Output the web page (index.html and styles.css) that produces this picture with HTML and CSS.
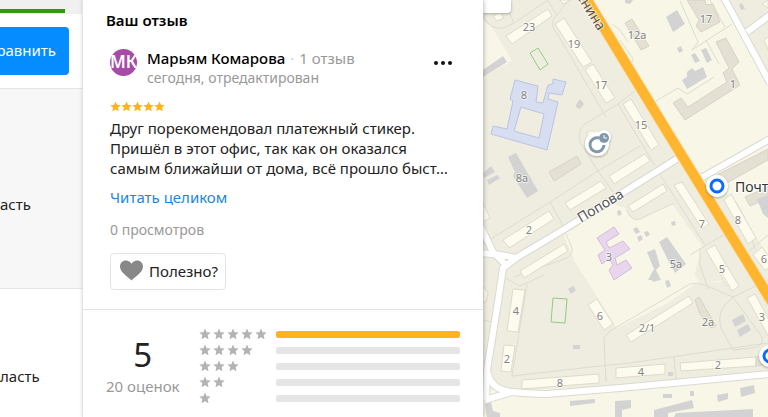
FILE: index.html
```html
<!DOCTYPE html>
<html lang="ru">
<head>
    <meta charset="UTF-8">
    <meta name="viewport" content="width=device-width, initial-scale=1.0">
    <title>Отзывы на карте</title>
    <link rel="stylesheet" href="styles.css">
</head>
<body>

    <svg class="sprite" aria-hidden="true">
        <symbol id="star" viewBox="0 0 24 24">
            <path d="M12 1l3.3 7.4 8 .8-6 5.400 1.700 7.900-7-4.100-7 4.100 1.700-7.900-6-5.400 8-.8z"/>
        </symbol>
    </svg>

    <div class="layout">
        <aside class="sidebar">
            <div class="progress"></div>
            <div class="toolbar">
                <button type="button" class="compare">равнить</button>
            </div>
            <div class="place place-active">асть</div>
            <div class="place">ласть</div>
        </aside>

        <main class="panel">
            <section class="review-section">
                <h2>Ваш отзыв</h2>
                <article class="review">
                    <header class="review-header">
                        <div class="avatar">МК</div>
                        <div class="author">
                            <div><b>Марьям Комарова</b><span class="dot">·</span><span class="muted">1 отзыв</span></div>
                            <div class="muted date">сегодня, отредактирован</div>
                        </div>
                        <button type="button" class="more" aria-label="Ещё">
                            <svg viewBox="0 0 18 4"><circle cx="2" cy="2" r="2"/><circle cx="9" cy="2" r="2"/><circle cx="16" cy="2" r="2"/></svg>
                        </button>
                    </header>
                    <div class="stars">
                        <svg><use href="#star"/></svg>
                        <svg><use href="#star"/></svg>
                        <svg><use href="#star"/></svg>
                        <svg><use href="#star"/></svg>
                        <svg><use href="#star"/></svg>
                    </div>
                    <p class="review-text">Друг порекомендовал платежный стикер.<br>Пришёл в этот офис, так как он оказался<br>самым ближайши от дома, всё прошло быст…</p>
                    <a href="#" class="read-more">Читать целиком</a>
                    <div class="views">0 просмотров</div>
                    <button type="button" class="useful">
                        <svg viewBox="0 0 24 21"><path d="M12 21C9 17.500 0 12.500 0 6.500 0 2.500 2.700 0 6.200 0 8.700 0 11 1.300 12 3.500 13 1.300 15.300 0 17.800 0 21.300 0 24 2.500 24 6.500 24 12.500 15 17.500 12 21z"/></svg>
                        Полезно?
                    </button>
                </article>
            </section>

            <section class="rating">
                <div class="summary">
                    <div class="score">5</div>
                    <div class="count">20 оценок</div>
                </div>
                <div class="bars">
                    <div class="bar-row">
                        <div class="bar-stars"><svg><use href="#star"/></svg><svg><use href="#star"/></svg><svg><use href="#star"/></svg><svg><use href="#star"/></svg><svg><use href="#star"/></svg></div>
                        <div class="bar bar-full"></div>
                    </div>
                    <div class="bar-row">
                        <div class="bar-stars"><svg><use href="#star"/></svg><svg><use href="#star"/></svg><svg><use href="#star"/></svg><svg><use href="#star"/></svg></div>
                        <div class="bar"></div>
                    </div>
                    <div class="bar-row">
                        <div class="bar-stars"><svg><use href="#star"/></svg><svg><use href="#star"/></svg><svg><use href="#star"/></svg></div>
                        <div class="bar"></div>
                    </div>
                    <div class="bar-row">
                        <div class="bar-stars"><svg><use href="#star"/></svg><svg><use href="#star"/></svg></div>
                        <div class="bar"></div>
                    </div>
                    <div class="bar-row">
                        <div class="bar-stars"><svg><use href="#star"/></svg></div>
                        <div class="bar"></div>
                    </div>
                </div>
            </section>
        </main>

        <div class="map">
            <svg class="map-canvas" viewBox="483 0 285 417" preserveAspectRatio="xMinYMin slice" role="img" aria-label="Карта">
                <!-- land -->
                <g class="land">
                    <path d="M483 0H587L671 138 677 155 620 190 516 254 483 250V77L512 61 493 29 483 20z"/>
                    <path d="M483 255L510 262 563 231 575 262 617 328 668 303 695 284 720 282 746 268 775 306V375L620 386 520 390 483 390z"/>
                    <path d="M563 231L682 157 752 275 700 284 668 220z"/>
                    <path d="M725 0H768V78L745 35z"/>
                    <path d="M703 177L725 190 768 255V295z"/>
                </g>
                <path class="land-light" d="M564 236L610 203 625 208Q630 222 638 220L672 204 702 246 692 285 668 300 617 328 575 262z"/>

                <!-- paths and yard borders -->
                <g class="yards">
                    <path d="M483 16Q490 30 503 28L514 23 548 0M548 0L557 16M569 0L553 20Q551 27 558 35L606 117M514 23L509 12"/>
                    <path d="M635 91L618 104 585 124Q577 130 580 142L598 171 613 192M618 104L642 144 655 166M598 171L550 202 483 244M598 171L640 146M550 202L560 220 572 248Q573 254 567 258L514 277"/>
                    <path d="M612 24L620 30 628 42M620 40L632 57Q636 64 625 62M656 101L678 88 687 94 714 77M680 1L698 42 692 50 732 24M706 40L719 64M710 0L725 27"/>
                    <path d="M658 172L670 190 705 245M627 210Q632 222 640 219L674 203M690 255L725 234M700 248L700 265 708 289M748 252L768 235M730 195Q745 210 755 249"/>
                    <path d="M527 284L512 376M512 376L600 366 630 363 768 343M606 382L604 338Q606 333 620 325L690 284Q697 282 705 285L733 297 762 337Q764 346 753 348L733 350 721 328Q715 310 733 297L768 280M674 357L676 380M483 320L492 322M500 275L520 286 544 275"/>
                </g>

                <!-- streets -->
                <g class="street-edge">
                    <path id="s1" d="M480 253Q500 254 516 258L563 230 680 157"/>
                    <path id="s2" d="M480 225L493 252 505 264M516 258L503 268 498 302 487 370Q490 390 512 392T547 394L620 388 770 374M485 400L512 392M487 370L486 400"/>
                    <path id="s3" d="M701 178L770 139M723 -4L770 83M747 32L770 15"/>
                </g>
                <g class="street">
                    <use href="#s1"/><use href="#s2"/><use href="#s3"/>
                </g>
                <path class="avenue-edge" d="M584 -5L671 138 780 315"/>
                <path class="avenue" d="M584 -5L671 138 780 315"/>

                <!-- residential buildings -->
                <g class="house">
                    <path d="M506 36L548 9 552 16 512 44z M555 24L564 18 592 62 583 67z M585 70L593 64 615 98 606 103z"/>
                    <path d="M560 0H571L563 4z M493 16L500 12 504 18 497 21z"/>
                    <path d="M623 104L631 99 659 145 651 150z M586 133L593 130 608 153 601 158z"/>
                    <path d="M565 203L601 181 606 188 570 210z M609 176L645 154 650 161 614 184z M503 240L549 211 554 219 509 248z M520 271L564 244 568 251 524 278z"/>
                    <path d="M628 206L663 184 667 191 633 212z M674 185L682 182 709 224 702 229z M724 200L731 194 756 238 748 244z M706 250L715 245 735 281 727 286z"/>
                    <path d="M753 255L762 247 775 265 765 270z M626 335L689 296 693 303 631 342z M747 298L755 294 780 340 775 348z M720 270L727 266 739 286 732 291z"/>
                    <path d="M513 289L525 290 518 332 507 331z M504 345L515 346 511 372 501 371z M588 305L597 299 613 324 604 330z"/>
                    <path d="M522 380L599 374V383L522 389z M616 368L665 364V374L616 378z M680 363L756 357V366L681 371z M762 4L768 0V8z M764 40L770 36V54z"/>
                    <path d="M483 203L490 218 483 222z M483 286L488 293 486 302 483 302z"/>
                </g>
                <g class="house-dark">
                    <path d="M625 23L632 19 649 46 641 50z M687 0H705L706 5 713 4 720 22 701 32 696 26 699 20z"/>
                    <path d="M716 42L726 38 739 62 732 69 740 85 685 120 673 103 681 98 688 107 727 82 723 73 729 68z"/>
                    <path d="M549 172L577 156 581 164 554 181z M717 175L768 149V160L725 184z M745 197L768 187V198L750 206z M695 300L699 297 716 326 711 328 700 314z M756 357L768 355V364L756 366z"/>
                </g>
                <g class="school">
                    <path d="M515 80L538 86 536 102 543 103 548 85 553 84V79L566 82 562 95 549 93 548 99 558 102 547 150 491 134 493 126 507 129 513 101 510 99z M521 107L514 131 539 138 544 114z"/>
                </g>
                <g class="kinder">
                    <path d="M597 238L614 227 619 234 606 242 609 248 623 241 630 249 615 258 617 265 626 260 632 268 614 280 609 270 613 265 609 259 602 264 598 255 605 250z"/>
                </g>
                <g class="shed">
                    <path d="M483 70L503 56 507 62 483 77z M576 105L580 99 584 104 580 109 576 107z M625 0H633L630 4 625 3z M666 17L677 10 685 24 673 32z M677 48L681 46 683 51 679 53z M691 55L695 53 700 61 695 63z M701 50L706 48 712 60 707 63z"/>
                    <path d="M682 80L687 77V72L692 68 695 71 703 67 707 77 687 89z M739 5L742 3 745 9 741 10z M508 157L516 153 538 191 527 198 513 176 515 172z"/>
                    <path d="M483 173L491 166 495 172 484 178z M487 180L497 175 500 178 489 185z M617 211L620 210 622 214 618 216z M671 222L675 221 676 225 672 226z M633 229L637 227 640 232 636 234z M637 237L641 235 643 239 639 242z M644 232L648 231 650 235 646 237z"/>
                    <path d="M659 242L667 237 686 264 675 273 668 260z M647 252L655 249 660 266 656 270 661 280H648L654 269z M757 199L768 195V218L763 214z M732 320L743 314 746 321 735 327z M737 330L748 324 751 330 740 337z"/>
                    <path d="M568 289L573 286 576 290 571 294z M573 345H580V349H573z M650 276L657 275 660 280 653 282z M665 281L669 280 671 286 667 288z M668 372H673V376H668z"/>
                    <path d="M570 401L595 399V403L570 406z M485 404L491 402 493 411 500 413V417H487z M615 401L631 400V408L622 410V417H615z M663 394H672V398H663z M690 391H694V396H690z M717 395L728 393V399L718 402z M740 388L754 385 755 393 741 397z M654 410L692 400 694 408 668 413V417H654z M676 413L753 409V417H674z"/>
                </g>
                <g class="pitch">
                    <path d="M530 53L538 48 548 64 540 70z M553 298L567 299 565 323 551 322z"/>
                </g>

                <g class="numbers">
                    <text x="529" y="31">23</text>
                    <text x="574" y="48">19</text>
                    <text x="601" y="89">17</text>
                    <text x="524" y="99">8</text>
                    <text x="706" y="23">17</text>
                    <text x="637" y="39">12а</text>
                    <text x="733" y="88">1</text>
                    <text x="641" y="129">15</text>
                    <text x="522" y="182">8а</text>
                    <text x="529" y="234">2</text>
                    <text x="609" y="261">3</text>
                    <text x="702" y="228">7</text>
                    <text x="738" y="224">8</text>
                    <text x="676" y="268">5а</text>
                    <text x="722" y="273">5</text>
                    <text x="764" y="263">6</text>
                    <text x="516" y="315">4</text>
                    <text x="507" y="363">2</text>
                    <text x="600" y="320">6</text>
                    <text x="560" y="387">8</text>
                    <text x="647" y="332">2/1</text>
                    <text x="708" y="326">2а</text>
                    <text x="762" y="321">3</text>
                    <text x="641" y="376">4</text>
                    <text x="718" y="369">2</text>
                </g>
                <text class="street-name" transform="translate(581 223) rotate(-31)">Попова</text>
                <text class="street-name" transform="translate(571 -12) rotate(58)">Ленина</text>

                <!-- bank pin -->
                <g class="pin-bank">
                    <circle class="pin-bg" cx="597" cy="144" r="12"/>
                    <circle class="pin-bg" cx="604" cy="137" r="7"/>
                    <path d="M599 138A7 7 0 1 0 604 145"/>
                    <circle class="clock" cx="604" cy="138" r="5"/>
                    <path class="hands" d="M604 135V138H607"/>
                </g>
                <!-- post office pins -->
                <g class="pin-post">
                    <circle class="pin-bg" cx="717" cy="186" r="11"/>
                    <circle class="ring" cx="717" cy="186" r="6"/>
                    <circle class="pin-bg" cx="770" cy="356" r="11"/>
                    <circle class="ring" cx="770" cy="356" r="6"/>
                </g>
                <text class="poi" x="735" y="192">Почта</text>
            </svg>
            <div class="map-control"></div>
        </div>
    </div>

</body>
</html>
```

FILE: styles.css
```css
* {
    box-sizing: border-box;
}

body {
    margin: 0;
    font-family: 'Noto Sans', sans-serif;
    font-size: 15px;
    line-height: 20px;
    color: #222;
    background: #fff;
}

h2, p {
    margin: 0;
}

button {
    font: inherit;
    color: inherit;
    cursor: pointer;
}

.sprite {
    display: none;
}

.layout {
    display: grid;
    grid-template-columns: 82fr 401fr 285fr;
    grid-template-rows: minmax(0, 1fr);
    height: 100vh;
    overflow: hidden;
}

/* left column */
.sidebar {
    display: flex;
    flex-direction: column;
    overflow: hidden;
}

.progress {
    height: 14px;
    flex-shrink: 0;
    padding-top: 9px;
    background: #f0f0f0;
}

.progress::before {
    content: '';
    display: block;
    width: 65px;
    height: 4px;
    background: #2e9c08;
}

.toolbar {
    display: flex;
    flex-shrink: 0;
    justify-content: flex-end;
    padding: 13px;
    border-bottom: 1px solid #e4e4e4;
}

.compare {
    height: 48px;
    padding: 0 13px 2px;
    border: none;
    border-radius: 4px;
    background: #058cff;
    color: #fff;
}

.place {
    height: 200px;
    padding-top: 77px;
    flex-shrink: 0;
}

.place-active {
    padding-top: 105px;
    background: #f7f7f7;
    border-bottom: 1px solid #e4e4e4;
}

/* review panel */
.panel {
    position: relative;
    z-index: 1;
    background: #fff;
    border-left: 1px solid #e4e4e4;
    box-shadow: 1px 0 4px rgba(0, 0, 0, 0.25);
}

.review-section {
    padding: 10px 23px 19px;
    border-bottom: 1px solid #e4e4e4;
}

h2 {
    font-size: 15px;
    font-weight: 600;
    color: #000;
}

.review {
    padding: 18px 4px 0;
}

.review-header {
    display: flex;
    gap: 10px;
}

.avatar {
    width: 27px;
    height: 27px;
    margin-top: 1px;
    border-radius: 50%;
    background: #a64ca6;
    color: #fff;
    font-size: 17px;
    font-weight: 600;
    line-height: 26px;
    display: flex;
    justify-content: center;
}

.author {
    flex: 1;
}

.author b {
    font-weight: 500;
    color: #000;
}

.date {
    font-size: 14px;
}

.dot {
    margin: 0 5px;
    color: #ccc;
}

.muted, .views, .count {
    color: #999;
}

.more {
    align-self: flex-start;
    display: flex;
    padding: 13px 4px;
    border: none;
    background: none;
}

.more svg {
    width: 18px;
    height: 4px;
    fill: #111;
}

.stars {
    display: flex;
    margin-top: 13px;
}

.stars svg {
    width: 11px;
    height: 11px;
    fill: #ffb41f;
}

.review-text {
    margin-top: 6px;
    white-space: nowrap;
}

.read-more {
    display: block;
    margin-top: 9px;
    color: #1c86e0;
    text-decoration: none;
}

.views {
    margin-top: 13px;
    font-size: 14px;
}

.useful {
    display: flex;
    align-items: center;
    gap: 6px;
    height: 37px;
    margin-top: 13px;
    padding: 0 7px 2px 9px;
    border: 1px solid #e4e4e4;
    border-radius: 4px;
    background: #fff;
}

.useful svg {
    width: 23px;
    height: 21px;
    fill: #888;
}

/* rating summary */
.rating {
    display: flex;
    gap: 19px;
    padding: 16px 23px;
}

.summary {
    text-align: center;
    white-space: nowrap;
}

.score {
    margin-top: 8px;
    font-size: 33px;
    line-height: 42px;
}

.bars {
    flex: 1;
}

.bar-row {
    display: flex;
    align-items: center;
    height: 16px;
}

.bar-stars {
    display: flex;
    gap: 2px;
    width: 77px;
}

.bar-stars svg {
    width: 12px;
    height: 12px;
    fill: #b3b3b3;
}

.bar {
    flex: 1;
    height: 7px;
    border-radius: 2px;
    background: #e5e5e5;
}

.bar-full {
    background: #ffb41f;
}

/* map */
.map {
    position: relative;
    overflow: hidden;
    background: #f8f7e7;
}

.map-canvas {
    display: block;
    width: 100%;
    height: 100%;
}

.map-control {
    position: absolute;
    top: 0;
    left: 0;
    width: 28px;
    height: 13px;
    border-radius: 0 0 4px 0;
    background: #fff;
    box-shadow: 0 1px 3px rgba(0, 0, 0, 0.3);
}

.land {
    fill: #eeede0;
}

.land-light {
    fill: #f8f7e7;
}

.yards {
    fill: none;
    stroke: #dcddcf;
    stroke-width: 1;
}

.street-edge {
    fill: none;
    stroke: #d9d9d4;
    stroke-width: 8;
    stroke-linejoin: round;
}

.street {
    fill: none;
    stroke: #fff;
    stroke-width: 6;
    stroke-linejoin: round;
}

.avenue-edge {
    fill: none;
    stroke: #f6e6c4;
    stroke-width: 12;
}

.avenue {
    fill: none;
    stroke: #ffb52e;
    stroke-width: 10;
}

.house {
    fill: #fdfbee;
    stroke: #dfdbc9;
}

.house-dark {
    fill: #e4e0d3;
    stroke: #d8d3c4;
}

.school {
    fill: #d8def2;
    fill-rule: evenodd;
    stroke: #b9c4e4;
}

.kinder {
    fill: #e8d6ec;
    stroke: #d5bbdc;
}

.shed {
    fill: #d3d3d3;
}

.pitch {
    fill: none;
    stroke: #93cb85;
    stroke-width: 1;
}

.numbers {
    font-size: 11px;
    fill: #85857f;
    stroke: #fff;
    stroke-opacity: 0.6;
    stroke-width: 2;
    paint-order: stroke;
    text-anchor: middle;
}

.street-name {
    font-size: 14px;
    fill: #555;
    stroke: #fff;
    stroke-width: 2;
    stroke-opacity: 0.7;
    paint-order: stroke;
}

.pin-bg {
    fill: #fff;
    stroke: none;
}

.pin-bank, .pin-post {
    filter: drop-shadow(0 1px 1px rgba(0, 0, 0, 0.3));
}

.pin-bank path {
    fill: none;
    stroke: #8397ab;
    stroke-width: 3;
}

.pin-bank .clock {
    fill: #8397ab;
}

.pin-bank .hands {
    stroke: #fff;
    stroke-width: 1;
}

.ring {
    fill: #fff;
    stroke: #0a6cff;
    stroke-width: 3;
}

.poi {
    font-size: 14px;
    fill: #333;
    stroke: #fff;
    stroke-width: 2;
    paint-order: stroke;
}
```
